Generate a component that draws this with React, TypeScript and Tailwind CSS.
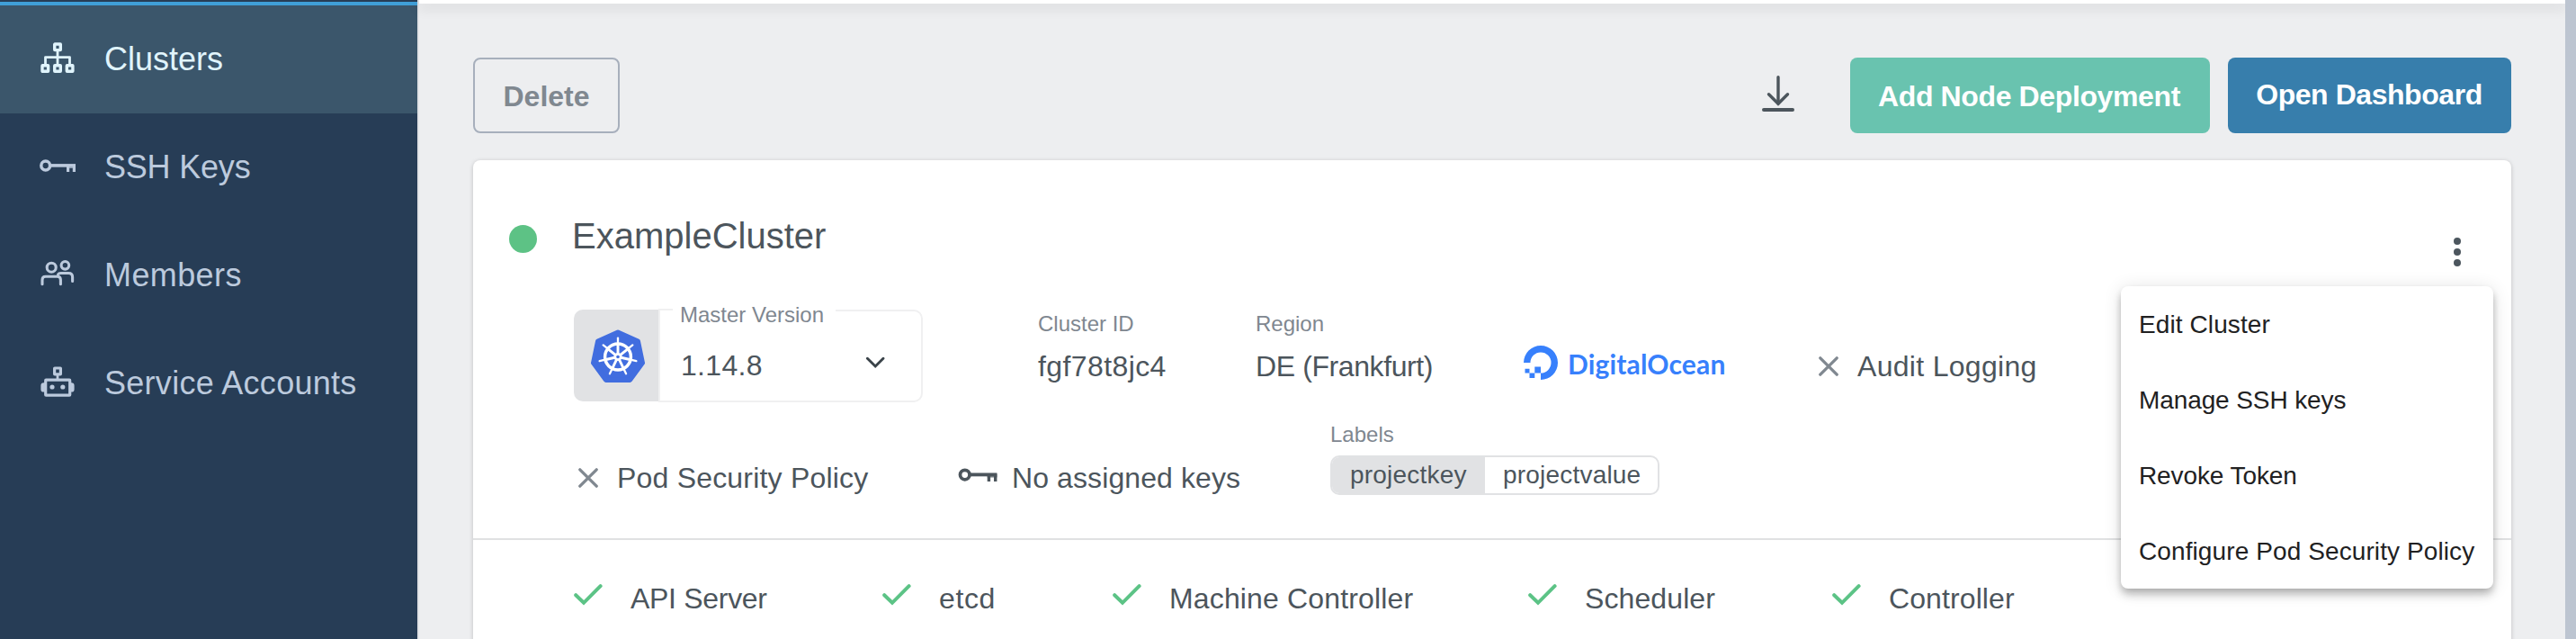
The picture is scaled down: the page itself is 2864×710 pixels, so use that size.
import type { ReactNode } from "react";

function ClustersIcon() {
  return (
    <svg width="40" height="40" viewBox="0 0 40 40" fill="none" stroke="currentColor" strokeWidth="3.4" strokeLinejoin="round">
      <rect x="16.7" y="3" width="6.6" height="6.6" rx="0.3" />
      <rect x="3" y="26.7" width="6.6" height="6.6" rx="0.3" />
      <rect x="16.7" y="26.7" width="6.6" height="6.6" rx="0.3" />
      <rect x="30.3" y="26.7" width="6.6" height="6.6" rx="0.3" />
      <path d="M20 10.5V26M6.5 26v-8.4h27V26" strokeWidth="2.8" />
    </svg>
  );
}

function KeyIcon({ className }: { className: string }) {
  return (
    <svg className={className} viewBox="0 0 40 14" fill="none" stroke="currentColor">
      <circle cx="6.7" cy="7" r="4.9" strokeWidth="3.5" />
      <path d="M12.5 6.9H40" strokeWidth="3.6" />
      <path d="M31.6 8v6M38.4 6v8" strokeWidth="3.2" />
      <path d="M30 9.2h10" strokeWidth="1" />
    </svg>
  );
}

function MembersIcon() {
  return (
    <svg width="40" height="40" viewBox="0 0 40 40" fill="none" stroke="currentColor" strokeWidth="3.1" strokeLinecap="round">
      <circle cx="13.2" cy="11.2" r="5" />
      <circle cx="28.4" cy="8.8" r="4.3" />
      <path d="M3 29.8v-4.9c0-2.3 1.4-3.7 3.7-3.7h13c2.5 0 3.7 1.4 3.7 3.7v4.9" />
      <path d="M20.5 19c.6-1 1.6-1.5 3-1.5h8.7c2.8 0 4.4 1.5 4.4 4.2v4.8" />
    </svg>
  );
}

function RobotIcon() {
  return (
    <svg width="40" height="40" viewBox="0 0 40 40" fill="none" stroke="currentColor" strokeWidth="3.2" strokeLinejoin="round">
      <rect x="16.6" y="3" width="6.8" height="6.8" rx="0.3" />
      <path d="M20 10.5V15" strokeWidth="2.8" />
      <rect x="6.7" y="16.2" width="27" height="17" rx="0.5" />
      <circle cx="14" cy="24" r="2.6" fill="currentColor" stroke="none" />
      <circle cx="25.8" cy="24" r="2.6" fill="currentColor" stroke="none" />
      <path d="M6 19.2H4.6a3.2 3.2 0 0 0-3.2 3.2v4a3.2 3.2 0 0 0 3.2 3.2H6zM34 19.2h1.4a3.2 3.2 0 0 1 3.2 3.2v4a3.2 3.2 0 0 1-3.2 3.2H34z" fill="currentColor" stroke="none" />
    </svg>
  );
}

function DownloadIcon() {
  return (
    <svg className="h-10 w-9" viewBox="0 0 36 40" fill="none" stroke="currentColor" strokeLinecap="round">
      <path d="M18 1.8V31" strokeWidth="3.4" />
      <path d="M7.5 20.8 18 31.3l10.5-10.5" strokeWidth="3.4" />
      <path d="M2 38h32" strokeWidth="4" />
    </svg>
  );
}

function CrossIcon() {
  return (
    <svg width="22" height="22" viewBox="0 0 22 22" fill="none" stroke="#808890" strokeWidth="3.3" strokeLinecap="round">
      <path d="M1.8 1.8l18.4 18.4M20.2 1.8 1.8 20.2" />
    </svg>
  );
}

function CheckIcon() {
  return (
    <svg width="32" height="24" viewBox="0 0 32 24" fill="none" stroke="#5cc386" strokeWidth="4" strokeLinecap="round">
      <path d="M2.2 12.2l8.8 8.6L29.6 2.2" />
    </svg>
  );
}

const SPOKES = [0, 1, 2, 3, 4, 5, 6].map((n) => (n * 360) / 7);

function KubernetesLogo() {
  return (
    <svg width="60" height="60" viewBox="0 0 60 60">
      <path
        d="M30 3.2 52.3 13.2 57.3 37.2 43.4 56.2H16.6L2.7 37.2 7.7 13.2z"
        fill="#416ddf"
        stroke="#416ddf"
        strokeWidth="5.4"
        strokeLinejoin="round"
      />
      <g fill="none" stroke="#fff" strokeLinecap="round">
        <circle cx="30" cy="30.5" r="14.4" strokeWidth="3.5" />
        {SPOKES.map((angle) => (
          <g key={angle} transform={`rotate(${angle} 30 30.5)`}>
            <path d="M30 27V17" strokeWidth="2.9" />
            <path d="M30 16V9.6" strokeWidth="2.3" />
          </g>
        ))}
      </g>
      <circle cx="30" cy="30.5" r="4.6" fill="#fff" />
      <circle cx="30" cy="30.5" r="1.8" fill="#416ddf" />
    </svg>
  );
}

function DigitalOceanLogo() {
  return (
    <svg width="38" height="38" viewBox="0 0 38 38" fill="#3780fc">
      <path d="M19 38v-7.5A11.5 11.5 0 1 0 7.5 19H0a19 19 0 1 1 19 19z" />
      <path d="M12.3 23.4H19v7h-6.7zM6.5 30.4h5.8V36H6.5zM1.5 25.8h5v4.6h-5z" />
    </svg>
  );
}

function NavItem({ icon, active, children }: { icon: ReactNode; active?: boolean; children: ReactNode }) {
  return (
    <a
      className={
        active
          ? "flex h-30 items-center bg-[#3b566b] pl-11 text-[36px] text-[#e0f4fc]"
          : "flex h-30 items-center pl-11 text-[36px] text-[#bccadd]"
      }
    >
      <span className="flex h-10 w-[72px] items-center">{icon}</span>
      {children}
    </a>
  );
}

function Status({ className, children }: { className: string; children: ReactNode }) {
  return (
    <div className={`flex items-start ${className}`}>
      <span className="mt-[49px] mr-[31px]">
        <CheckIcon />
      </span>
      <span className="mt-[45px] leading-10">{children}</span>
    </div>
  );
}

export default function App() {
  return (
    <div className="flex h-[710px] w-[2864px] overflow-hidden bg-[#edeef0] font-['Liberation_Sans',Arial,sans-serif] text-[32px] whitespace-nowrap text-[#4c555c]">
      <aside className="w-[464px] shrink-0 bg-[#273d56]">
        <div className="mt-0.5 h-1 bg-[#409fd8]" />
        <nav>
          <NavItem icon={<ClustersIcon />} active>
            <span>Clusters</span>
          </NavItem>
          <NavItem icon={<KeyIcon className="-mt-1 h-3.5 w-10" />}>
            <span className="tracking-[-0.2px]">SSH Keys</span>
          </NavItem>
          <NavItem icon={<MembersIcon />}>
            <span className="tracking-[0.4px]">Members</span>
          </NavItem>
          <NavItem icon={<RobotIcon />}>
            <span className="tracking-[0.28px]">Service Accounts</span>
          </NavItem>
        </nav>
      </aside>

      <main className="flex w-[2388px] shrink-0 flex-col border-l-2 border-[#e0e2e5]">
        <header className="h-1 shrink-0 bg-white shadow-[0_4px_14px_2px_rgba(0,0,0,0.09)]" />

        <div className="flex h-[174px] shrink-0 items-start pt-15 pr-15 pl-15">
          <button className="flex h-21 w-[163px] items-center justify-center rounded-lg border-2 border-[#a7afbc] pt-0.5 font-bold text-[#808890]">
            Delete
          </button>
          <span className="mt-5 ml-auto">
            <DownloadIcon />
          </span>
          <button className="ml-[62px] flex h-21 w-[400px] items-center justify-center rounded-lg bg-[#69c3af] pt-0.5 pr-0.5 font-bold tracking-[-0.38px] text-white">
            Add Node Deployment
          </button>
          <button className="ml-5 flex h-21 w-[315px] items-center justify-center rounded-lg bg-[#377eac] pr-px pb-0.5 font-bold tracking-[-0.45px] text-white">
            Open Dashboard
          </button>
        </div>

        <section className="relative mx-15 h-[600px] shrink-0 rounded-lg bg-white shadow-[0_1px_5px_rgba(0,0,0,0.2)]">
          <div className="flex h-[165px] items-start pr-14 pl-10">
            <span className="mt-[72px] h-[31px] w-[31px] rounded-full bg-[#5dc285]" />
            <h1 className="mt-[60px] ml-[39px] text-[40px] leading-12">ExampleCluster</h1>
            <button className="mt-[86px] ml-auto flex flex-col gap-1">
              <span className="h-2 w-2 rounded-full bg-[#4c565e]" />
              <span className="h-2 w-2 rounded-full bg-[#4c565e]" />
              <span className="h-2 w-2 rounded-full bg-[#4c565e]" />
            </button>
          </div>

          <div className="flex h-[104px] items-start pl-28">
            <div className="mt-px flex h-[102px] w-[94px] items-center justify-center rounded-l-[10px] bg-[#e1e2e4] pt-0.5 pl-[3px]">
              <KubernetesLogo />
            </div>
            <div className="relative flex h-[104px] w-[294px]">
              <span className="w-4 border-2 border-r-0 border-[#f0f0f1]" />
              <div className="mt-px flex flex-1 items-center justify-between rounded-r-[10px] border-2 border-l-0 border-[#f0f0f1] pr-10 pl-[9px]">
                <span className="mt-[21px] tracking-[0.3px]">1.14.8</span>
                <svg className="mt-[14px]" width="22" height="14" viewBox="0 0 22 14" fill="none" stroke="#3a4349" strokeWidth="2.9" strokeLinecap="round">
                  <path d="M2.4 2.2l8.8 8.8L20 2.2" />
                </svg>
              </div>
              <label className="absolute -top-2 left-4 w-[181px] bg-white pl-2 text-[24px] leading-[30px] text-[#7f8790]">
                Master Version
              </label>
            </div>
            <div className="ml-32 w-[242px]">
              <div className="mt-px text-[24px] leading-8 text-[#7f8790]">Cluster ID</div>
              <div className="mt-[11px] leading-10 tracking-[0.4px]">fgf78t8jc4</div>
            </div>
            <div className="w-[298px]">
              <div className="mt-px text-[24px] leading-8 text-[#7f8790]">Region</div>
              <div className="mt-[11px] leading-10 tracking-[-0.4px]">DE (Frankfurt)</div>
            </div>
            <div className="mt-10 flex w-[328px] items-center">
              <DigitalOceanLogo />
              <span className="mt-0.5 ml-[11px] font-[Lato] text-[30px] leading-[38px] font-bold tracking-[0.15px] text-[#3780fc]">
                DigitalOcean
              </span>
            </div>
            <div className="mt-11 flex items-start">
              <span className="mt-[9px]">
                <CrossIcon />
              </span>
              <span className="ml-[21px] leading-10 tracking-[0.3px]">Audit Logging</span>
            </div>
          </div>

          <div className="flex h-[151px] items-start pl-[117px]">
            <div className="flex w-[422px] items-start pt-16">
              <span className="mt-[9px]">
                <CrossIcon />
              </span>
              <span className="ml-[21px] leading-10 tracking-[0.2px]">Pod Security Policy</span>
            </div>
            <div className="flex w-[414px] items-start pt-16">
              <KeyIcon className="mt-[9px] h-[15px] w-11" />
              <span className="ml-4 leading-10 tracking-[0.1px]">No assigned keys</span>
            </div>
            <div className="pt-5">
              <div className="text-[24px] leading-8 text-[#7f8790]">Labels</div>
              <div className="mt-[7px] flex h-11 w-[366px] overflow-hidden rounded-[10px] border-2 border-[#e1e2e4] text-[28px] leading-10 tracking-[0.2px]">
                <span className="w-[170px] bg-[#e1e2e4] pl-5">projectkey</span>
                <span className="pl-5">projectvalue</span>
              </div>
            </div>
          </div>

          <div className="flex items-start border-t-2 border-[#e0e1e2] pl-28">
            <Status className="w-[343px] tracking-[-0.3px]">API Server</Status>
            <Status className="w-[256px] tracking-[0.6px]">etcd</Status>
            <Status className="w-[462px] tracking-[0.15px]">Machine Controller</Status>
            <Status className="w-[338px] tracking-[0.1px]">Scheduler</Status>
            <Status className="tracking-[0.1px]">Controller</Status>
          </div>

          <ul className="absolute top-[140px] right-5 w-[414px] rounded-lg bg-white text-[28px] text-[#212122] shadow-[0_4px_8px_-2px_rgba(0,0,0,0.2),0_8px_10px_0_rgba(0,0,0,0.14),0_2px_20px_0_rgba(0,0,0,0.12)]">
            <li className="flex h-21 items-center pt-px pl-5 tracking-[0.1px]">Edit Cluster</li>
            <li className="flex h-21 items-center pt-px pl-5 tracking-[-0.1px]">Manage SSH keys</li>
            <li className="flex h-21 items-center pt-px pl-5 tracking-[-0.1px]">Revoke Token</li>
            <li className="flex h-21 items-center pt-px pl-5 tracking-[0.1px]">Configure Pod Security Policy</li>
          </ul>
        </section>
      </main>

      <div className="w-3 shrink-0 bg-[#bdc5d1]" />
    </div>
  );
}
